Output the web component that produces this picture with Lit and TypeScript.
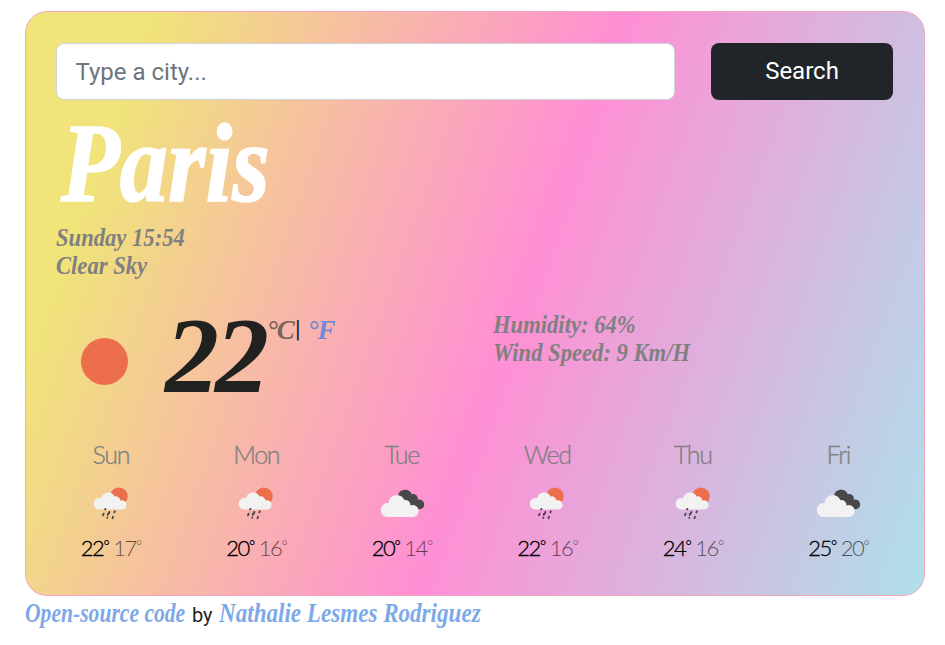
import { LitElement, html, css, svg } from "lit";
import { customElement, property } from "lit/decorators.js";

type Sky = "rain" | "clouds";
interface Day { name: string; sky: Sky; high: number; low: number; }

const DAYS: Day[] = [
  { name: "Sun", sky: "rain", high: 22, low: 17 },
  { name: "Mon", sky: "rain", high: 20, low: 16 },
  { name: "Tue", sky: "clouds", high: 20, low: 14 },
  { name: "Wed", sky: "rain", high: 22, low: 16 },
  { name: "Thu", sky: "rain", high: 24, low: 16 },
  { name: "Fri", sky: "clouds", high: 25, low: 20 },
];

@customElement("sky-icon")
class SkyIcon extends LitElement {
  @property() sky: Sky = "rain";
  static styles = css`
    :host { display: block; width: 50px; height: 42px; }
    svg { display: block; width: 50px; height: 42px; }
    .sun { fill: #ec6e4c; }
    .cloud { fill: #f2f2f2; }
    .dark { fill: #48484a; }
    .rain { stroke: #48404a; stroke-width: 1.8; stroke-linecap: round; }
  `;
  render() {
    return html`<svg viewBox="-1 -1 50 42">${this.sky === "rain"
      ? svg`<circle class="sun" cx="31.9" cy="14.3" r="8.8"/>
          <path class="cloud" d="M11.9 27.4 A5.7 5.7 0 0 1 12.9 16 H14.2 A7.1 7.1 0 0 1 27.6 14.6 A4.4 4.4 0 0 1 33.4 18.6 A4.6 4.6 0 1 1 34 27.4 Z"/>
          <path class="rain" d="M18.4 26.8l-.2 .6M22.4 29.8l-.5 1.6M27.8 29.3l-.4 1M16.6 31.7l-.6 1.6M21.2 31.6l-.5 1.4M26 34.8l-.5 1.4M20.3 35.6l-.1 .2"/>`
      : svg`<path class="dark" d="M20 14 A7.2 7.2 0 0 1 33.8 12.3 A4.5 4.5 0 0 1 39.6 17.8 A4.9 4.9 0 1 1 40 27.1 L27 25 Z"/>
          <path class="cloud" d="M10 35 A7 7 0 0 1 9.5 21 H10.6 A8.3 8.3 0 0 1 26.4 18 A5.5 5.5 0 0 1 32.6 23.4 A6 6 0 1 1 34.6 35 Z"/>`}</svg>`;
  }
}

@customElement("app-root")
class AppRoot extends LitElement {
  static styles = css`
    :host { display: block; padding: 11px 20px 0 25px; height: 645px; box-sizing: border-box; background: #fff; font-family: Roboto, sans-serif; color: #212529; white-space: nowrap; }
    * { box-sizing: border-box; }
    .card { height: 585px; border: 1px solid #f3a5c4; border-radius: 22px; padding: 31px 31px 0 30px; background: linear-gradient(109.6deg, #f0e47a 11.2%, #ff8fd4 54%, #aee0ea 100%); display: flex; flex-direction: column; }
    .search { display: grid; grid-template-columns: 619px 182px; gap: 36px; height: 57px; flex: none; }
    .field { border: 1px solid #ced4da; border-radius: 8px; background: #fff; padding: 0 18.5px; font: 24px/54px Roboto, sans-serif; outline: none; min-width: 0; width: 100%; }
    .field::placeholder { color: #6c757d; opacity: 1; }
    .button { border: 0; border-radius: 8px; background: #212529; color: #fff; font: 24px/54px Roboto, sans-serif; padding: 0 0 2px; }
    .fancy { font-family: "Liberation Serif", serif; font-style: italic; font-weight: 700; transform-origin: 0 50%; }
    .city { margin: 4px 0 2px 5px; font-size: 112px; line-height: 118px; height: 118px; color: #fff; width: max-content; transform: scaleX(.86); -webkit-text-stroke: 1.5px #fff; flex: none; }
    .facts { color: #808080; font-size: 26px; line-height: 28px; width: max-content; transform: scaleX(.87); }
    .current { display: grid; grid-template-columns: 437px 1fr; height: 120px; margin-top: 16px; }
    .now { display: flex; align-items: flex-start; }
    .disc { width: 47px; height: 47px; border-radius: 50%; background: #ec6e4c; margin: 42px 37px 0 25px; }
    .degrees { font-size: 108px; line-height: 120px; width: 102px; letter-spacing: -4px; color: #212220; }
    .units { display: flex; margin-top: 20px; font-size: 23px; line-height: 28px; }
    .script { font-family: "Liberation Serif", serif; font-style: italic; font-weight: 700; color: #7da9e8; }
    .unit { font-size: 27px; width: 28px; letter-spacing: -1px; }
    .celsius { color: #7b625a; }
    .fahrenheit { color: #708ad3; margin-left: 7px; }
    .wind { margin-top: 15px; }
    .week { display: grid; grid-template-columns: repeat(6, 145.5px); margin: 23px 0 0 -18px; }
    .day { display: flex; flex-direction: column; align-items: center; }
    .name { font: 300 25px/30px Lato, sans-serif; letter-spacing: -1.3px; color: #808080; -webkit-text-stroke: .3px #808080; }
    .icon { margin-top: 12px; }
    .range { display: flex; gap: 5px; margin-top: 10px; font: 300 22px/30px Lato, sans-serif; letter-spacing: -1.4px; }
    .deg { font-size: 15px; line-height: 0; vertical-align: 5px; }
    .high { color: #000; -webkit-text-stroke: .3px #000; }
    .low { color: #000; opacity: .6; }
    .credit { display: flex; align-items: baseline; gap: 6px; font-size: 20px; line-height: 34px; }
    .link { font-size: 27px; text-decoration: none; transform-origin: 0 50%; }
    .code { width: 161px; transform: scaleX(.8); }
    .author { transform: scaleX(.855); }
  `;
  render() {
    return html`
      <main class="card">
        <form class="search" @submit=${(e: Event) => e.preventDefault()}>
          <input class="field" placeholder="Type a city..." autocomplete="off">
          <button class="button">Search</button>
        </form>
        <div class="fancy city">Paris</div>
        <div class="fancy facts"><div>Sunday 15:54</div><div>Clear Sky</div></div>
        <section class="current">
          <div class="now">
            <div class="disc"></div>
            <div class="fancy degrees">22</div>
            <div class="units"><span class="script unit celsius">°C</span>|<span class="script unit fahrenheit">°F</span></div>
          </div>
          <div class="fancy facts wind"><div>Humidity: 64%</div><div>Wind Speed: 9 Km/H</div></div>
        </section>
        <section class="week">
          ${DAYS.map(d => html`<div class="day">
            <div class="name">${d.name}</div>
            <sky-icon class="icon" .sky=${d.sky}></sky-icon>
            <div class="range"><span class="high">${d.high}<span class="deg">°</span></span><span class="low">${d.low}<span class="deg">°</span></span></div>
          </div>`)}
        </section>
      </main>
      <footer class="credit"><a class="script link code">Open-source code</a><span>by</span><a class="script link author">Nathalie Lesmes Rodriguez</a></footer>`;
  }
}
